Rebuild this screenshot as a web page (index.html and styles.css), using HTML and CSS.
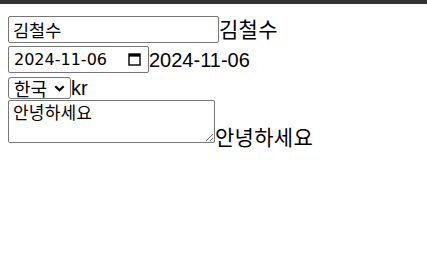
FILE: index.html
```html
<!DOCTYPE html>
<html lang="ko">
<head>
<meta charset="utf-8">
<link rel="stylesheet" href="styles.css">
</head>
<body>
<div class="topbar"></div>
<div class="form">
  <div class="row row-text">
    <input class="field field-text" type="text" value="김철수">
    <span class="echo echo-ko">김철수</span>
  </div>
  <div class="row row-date">
    <label class="field field-date">
      <input class="date-input" type="text" value="2024-11-06">
      <svg class="cal-icon" width="13" height="13" viewBox="0 0 13 13" aria-hidden="true">
        <rect x="1" y="1" width="11" height="11" fill="none" stroke="#000" stroke-width="1.4"/>
        <rect x="1" y="1" width="11" height="2.6" fill="#000"/>
      </svg>
    </label>
    <span class="echo">2024-11-06</span>
  </div>
  <div class="row row-select">
    <div class="field field-select">
      <select class="select-native">
        <option value="kr" selected>한국</option>
        <option value="jp">일본</option>
      </select>
      <svg class="chev" width="11" height="7" viewBox="0 0 11 7" aria-hidden="true">
        <path d="M1.3 1.3 L5.5 5.3 L9.7 1.3" fill="none" stroke="#000" stroke-width="2.2"/>
      </svg>
    </div>
    <span class="echo">kr</span>
  </div>
  <div class="row row-area">
    <textarea class="field field-area">안녕하세요</textarea>
    <span class="echo echo-ko echo-area">안녕하세요</span>
  </div>
</div>
</body>
</html>
```

FILE: styles.css
```css
html, body {
  margin: 0;
  padding: 0;
  background: #fff;
}
.topbar {
  height: 4px;
  background: #333;
}
.form {
  padding: 12px 8px 40px 8px;
  display: flex;
  flex-direction: column;
}
.row {
  display: flex;
  align-items: center;
}
.echo {
  font-family: "Liberation Sans", "Noto Sans CJK KR", sans-serif;
  font-size: 20px;
  color: #000;
  line-height: 1;
}
.echo-ko {
  font-size: 21px;
  letter-spacing: 0.3px;
}
.field {
  font-family: "Noto Sans CJK KR", "DejaVu Sans", sans-serif;
  font-size: 17.5px;
  color: #000;
  border: 1px solid #767676;
  background: #fff;
  margin: 0;
  box-sizing: border-box;
  border-radius: 2px;
}
.field-text {
  width: 211px;
  height: 27px;
  padding: 0 4px;
  line-height: 25px;
}
.row-date {
  margin-top: 3px;
}
.field-date {
  position: relative;
  display: flex;
  align-items: center;
  width: 141px;
  height: 27px;
  padding: 0 7px 0 4px;
}
.date-input {
  flex: 1;
  min-width: 0;
  border: 0;
  padding: 0 0 0 1px;
  margin: 0;
  outline: none;
  background: transparent;
  font-family: "DejaVu Sans", sans-serif;
  font-size: 16px;
  color: #000;
}
.cal-icon {
  flex: none;
  display: block;
}
.row-select {
  margin-top: 4px;
}
.field-select {
  position: relative;
  width: 63px;
  height: 22px;
  border-radius: 3px;
}
.select-native {
  -webkit-appearance: none;
  -moz-appearance: none;
  appearance: none;
  display: block;
  border: 0;
  border-radius: 0;
  background: transparent;
  margin: 0;
  width: 100%;
  height: 100%;
  padding: 0 0 0 5px;
  font: 18px/20px "Noto Sans CJK KR", sans-serif;
  color: #000;
  outline: none;
}
.chev {
  position: absolute;
  left: 45px;
  top: 7px;
  z-index: 1;
  pointer-events: none;
}
.field-area {
  width: 207px;
  height: 43px;
  margin-top: 1px;
  padding: 0 4px;
  line-height: 22px;
  letter-spacing: 0.2px;
  resize: both;
  font-size: 17px;
}
.row-area {
  align-items: flex-end;
}
.echo-area {
  margin-bottom: -5px;
}
```
